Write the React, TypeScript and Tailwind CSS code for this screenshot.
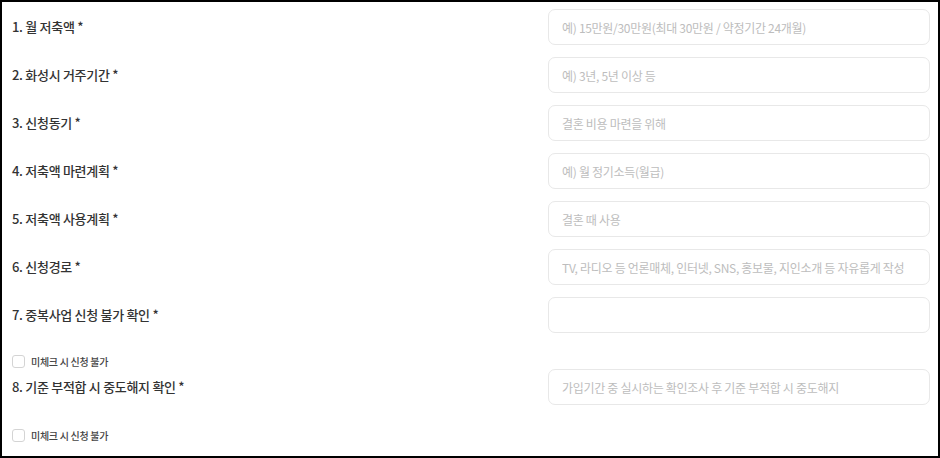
const FIELDS = [
  { label: "1. 월 저축액 *", placeholder: "예) 15만원/30만원(최대 30만원 / 약정기간 24개월)" },
  { label: "2. 화성시 거주기간 *", placeholder: "예) 3년, 5년 이상 등" },
  { label: "3. 신청동기 *", placeholder: "결혼 비용 마련을 위해" },
  { label: "4. 저축액 마련계획 *", placeholder: "예) 월 정기소득(월급)" },
  { label: "5. 저축액 사용계획 *", placeholder: "결혼 때 사용" },
  { label: "6. 신청경로 *", placeholder: "TV, 라디오 등 언론매체, 인터넷, SNS, 홍보물, 지인소개 등 자유롭게 작성" },
  { label: "7. 중복사업 신청 불가 확인 *", placeholder: "", check: true },
  { label: "8. 기준 부적합 시 중도해지 확인 *", placeholder: "가입기간 중 실시하는 확인조사 후 기준 부적합 시 중도해지", check: true },
];

const font = { fontFamily: '"Noto Sans CJK KR", "Noto Sans", sans-serif' };

function Row({ label, placeholder }: { label: string; placeholder: string }) {
  return (
    <div className="flex items-center justify-between">
      <label className="text-[13px] font-medium text-[#333] tracking-[-0.3px]">{label}</label>
      <input
        placeholder={placeholder}
        className="w-[382px] h-[36px] rounded-[7px] border border-[#e8e8e8] px-[13px] text-[12px] text-[#333] placeholder:text-[#bdbdbd] outline-none tracking-[-0.3px]"
        style={font}
      />
    </div>
  );
}

function Check() {
  return (
    <label className="flex items-center gap-[6px]">
      <span className="w-[13px] h-[13px] rounded-[3px] border border-[#d4d4d4] bg-white" />
      <span className="text-[10px] text-[#444] font-medium tracking-[-0.3px]">미체크 시 신청 불가</span>
    </label>
  );
}

export default function App() {
  return (
    <div className="w-[940px] h-[458px] bg-white border-2 border-black overflow-hidden" style={font}>
      <div className="pl-[10px] pr-[8px] pt-[7px] flex flex-col">
        {FIELDS.map((f, i) => (
          <div key={i} className={f.check ? "" : "mb-[12px]"}>
            <Row label={f.label} placeholder={f.placeholder} />
            {f.check &&
              (i === 6 ? (
                <div className="h-[36px] flex items-end">
                  <Check />
                </div>
              ) : (
                <div className="pt-[23px]">
                  <Check />
                </div>
              ))}
          </div>
        ))}
      </div>
    </div>
  );
}
